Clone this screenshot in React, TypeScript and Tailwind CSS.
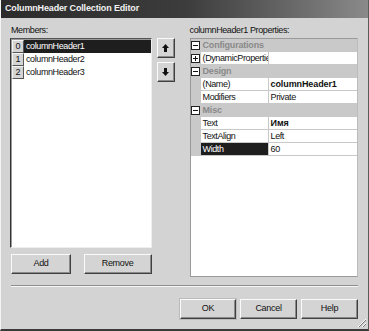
import React from "react";

type PropRow =
  | { kind: "cat"; label: string }
  | { kind: "item"; name: string; value: string; bold?: boolean; selected?: boolean; expand?: boolean };

const rows: PropRow[] = [
  { kind: "cat", label: "Configurations" },
  { kind: "item", name: "(DynamicProperties)", value: "", expand: true },
  { kind: "cat", label: "Design" },
  { kind: "item", name: "(Name)", value: "columnHeader1", bold: true },
  { kind: "item", name: "Modifiers", value: "Private" },
  { kind: "cat", label: "Misc" },
  { kind: "item", name: "Text", value: "Имя", bold: true },
  { kind: "item", name: "TextAlign", value: "Left" },
  { kind: "item", name: "Width", value: "60", selected: true },
];

const members = ["columnHeader1", "columnHeader2", "columnHeader3"];

function ExpandBox({ plus }: { plus?: boolean }) {
  return (
    <svg width="9" height="9" viewBox="0 0 9 9">
      <rect x="0.5" y="0.5" width="8" height="8" fill="#fff" stroke="#222" />
      <line x1="2" y1="4.5" x2="7" y2="4.5" stroke="#111" />
      {plus && <line x1="4.5" y1="2" x2="4.5" y2="7" stroke="#111" />}
    </svg>
  );
}

function Arrow({ down }: { down?: boolean }) {
  return (
    <svg width="7" height="8" viewBox="0 0 7 8" className={down ? "rotate-180" : ""}>
      <path d="M3.5 0 L7 4 L5 4 L5 8 L2 8 L2 4 L0 4 Z" fill="#111" />
    </svg>
  );
}

const btn =
  "flex items-center justify-center h-[20px] bg-[#d4d4d4] border border-t-[#fafafa] border-l-[#fafafa] border-r-[#404040] border-b-[#404040] shadow-[inset_-1px_-1px_0_#8a8a8a] text-[9px] tracking-[-0.3px] text-[#111]";

export default function App() {
  return (
    <div className="w-[369px] h-[331px] bg-[#d3d3d3] font-['Liberation_Sans',Arial,sans-serif] text-[#111] border-l border-l-[#f4f4f4] border-b-2 border-b-[#3a3a3a] border-r border-r-[#5a5a5a] relative overflow-hidden">
      <div className="h-[18px] bg-gradient-to-r from-[#2b2b2b] via-[#3c3c3c] to-[#8a8a8a] flex items-center pl-[4px]">
        <span className="text-[9px] font-bold tracking-[-0.15px] text-[#f2f2f2]">
          ColumnHeader Collection Editor
        </span>
      </div>

      <div className="pl-[9px] pr-[10px] pt-[5px]">
        <div className="flex">
          {/* members column */}
          <div className="w-[142px] flex flex-col">
            <div className="h-[15px] text-[9px] tracking-[-0.4px] leading-[15px] pl-[1px]">Members:</div>
            <div className="h-[210px] bg-white border border-t-[#555] border-l-[#333] border-r-[#eee] border-b-[#eee] shadow-[inset_1px_1px_0_#999] pt-[1px] pl-[1px]">
              {members.map((m, i) => (
                <div key={m} className="flex h-[13px] items-stretch">
                  <div className="w-[12px] bg-[#d4d4d4] border border-t-[#f4f4f4] border-l-[#f4f4f4] border-r-[#555] border-b-[#555] flex items-center justify-center text-[9px]">
                    {i}
                  </div>
                  <div
                    className={`flex-1 pl-[2px] text-[9px] tracking-[-0.4px] leading-[13px] ${
                      i === 0 ? "bg-[#1e1e1e] text-white" : ""
                    }`}
                  >
                    {m}
                  </div>
                </div>
              ))}
            </div>
            <div className="flex justify-between mt-[6px] pl-[1px]">
              <div className={`${btn} w-[60px]`}>Add</div>
              <div className={`${btn} w-[68px]`}>Remove</div>
            </div>
          </div>

          {/* arrows */}
          <div className="ml-[5px] pt-[15px] flex flex-col gap-[4px]">
            <div className={`${btn} w-[18px] h-[20px]`}>
              <Arrow />
            </div>
            <div className={`${btn} w-[18px] h-[20px]`}>
              <Arrow down />
            </div>
          </div>

          {/* properties */}
          <div className="ml-[15px] w-[169px] flex flex-col">
            <div className="h-[15px] text-[9px] tracking-[-0.4px] leading-[15px]">
              columnHeader1 Properties:
            </div>
            <div className="h-[239px] bg-white border border-[#9a9a9a] border-r-[#bcbcbc]">
              {rows.map((r, idx) =>
                r.kind === "cat" ? (
                  <div key={idx} className="flex h-[13px] bg-[#c9c9c9] items-center">
                    <div className="w-[10px] flex justify-center">
                      <ExpandBox />
                    </div>
                    <span className="pl-[2px] text-[9px] font-bold text-[#8a8a8a] tracking-[-0.2px]">
                      {r.label}
                    </span>
                  </div>
                ) : (
                  <div key={idx} className="flex h-[13px]">
                    <div className="w-[10px] bg-[#c9c9c9] flex items-center justify-center">
                      {r.expand && <ExpandBox plus />}
                    </div>
                    <div
                      className={`w-[68px] border-b border-r border-[#c9c9c9] pl-[2px] text-[9px] tracking-[-0.4px] leading-[12px] overflow-hidden whitespace-nowrap ${
                        r.selected ? "bg-[#1e1e1e] text-white" : ""
                      }`}
                    >
                      {r.name}
                    </div>
                    <div
                      className={`flex-1 border-b border-[#c9c9c9] pl-[2px] text-[9px] leading-[12px] ${
                        r.bold ? "font-bold tracking-[-0.1px]" : "tracking-[-0.4px]"
                      }`}
                    >
                      {r.value}
                    </div>
                  </div>
                )
              )}
            </div>
          </div>
        </div>

        <div className="mt-[8px] h-[2px] border-t border-t-[#8e8e8e] border-b border-b-[#f6f6f6] ml-[1px]" />

        <div className="flex justify-end gap-[4px] mt-[12px]">
          <div className={`${btn} w-[56px] border-[#111] border-t-[#111] border-l-[#111] outline outline-1 outline-[#bbb]`}>OK</div>
          <div className={`${btn} w-[57px]`}>Cancel</div>
          <div className={`${btn} w-[57px]`}>Help</div>
        </div>
      </div>

      <svg className="absolute right-[1px] bottom-[1px]" width="11" height="11" viewBox="0 0 11 11">
        <line x1="10" y1="2" x2="2" y2="10" stroke="#fff" />
        <line x1="10" y1="3" x2="3" y2="10" stroke="#777" />
        <line x1="10" y1="6" x2="6" y2="10" stroke="#fff" />
        <line x1="10" y1="7" x2="7" y2="10" stroke="#777" />
      </svg>
    </div>
  );
}
